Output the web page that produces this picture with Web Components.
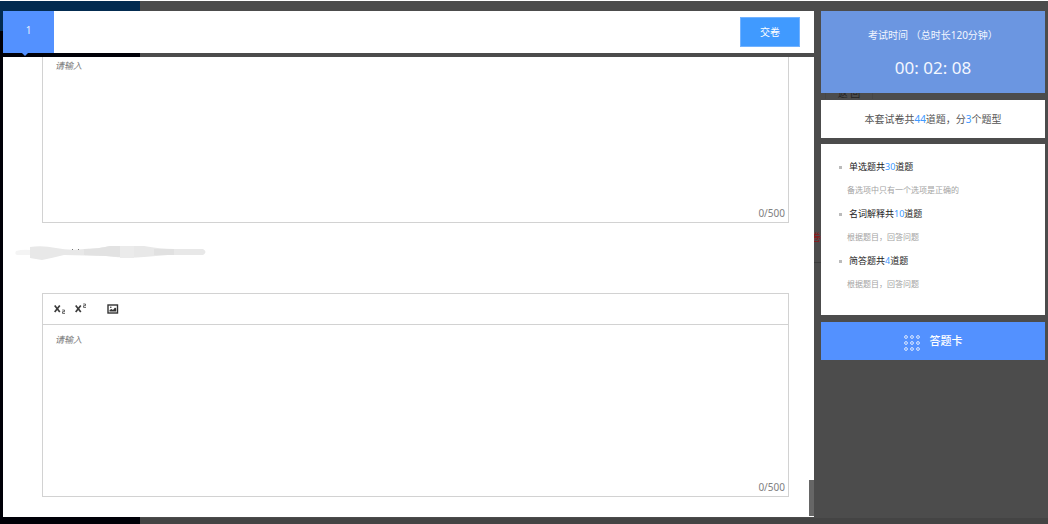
<!DOCTYPE html>
<html lang="zh-CN">
<head>
<meta charset="utf-8">
<meta name="viewport" content="width=device-width, initial-scale=1">
<title>在线考试</title>
<style>
  body { margin: 0; background: #4c4c4c; font-family: "Noto Sans", "Noto Sans CJK SC", sans-serif; font-size: 10px; line-height: 16px; }
</style>
</head>
<body>
<exam-page>
  <page-backdrop slot="backdrop"></page-backdrop>
  <exam-bar slot="main" number="1"></exam-bar>
  <question-panel slot="main">
    <answer-editor name="a1" bare></answer-editor>
    <masked-title></masked-title>
    <answer-editor name="a2"></answer-editor>
  </question-panel>
  <exam-timer slot="side" time="00: 02: 08">考试时间 （总时长120分钟）</exam-timer>
  <exam-summary slot="side" total="44" kinds="3"></exam-summary>
  <question-types slot="side">
    <question-type label="单选题" count="30">备选项中只有一个选项是正确的</question-type>
    <question-type label="名词解释" count="10">根据题目，回答问题</question-type>
    <question-type label="简答题" count="4">根据题目，回答问题</question-type>
  </question-types>
  <card-button slot="side">答题卡</card-button>
</exam-page>

<script>
  const define = (name, render) => customElements.define(name, class extends HTMLElement {
    constructor() {
      super();
      this.attachShadow({ mode: 'open' });
    }
    connectedCallback() {
      this.shadowRoot.innerHTML = render(this);
    }
  });

  define('exam-page', () => `
    <style>
      :host { display: grid; grid-template-columns: minmax(0, 1fr) 224px; gap: 7px; box-sizing: border-box; min-height: 100vh; padding: 11px 3px 7px; position: relative; }
      .main { display: flex; flex-direction: column; gap: 4px; position: relative; min-width: 0; }
      .side { display: flex; flex-direction: column; gap: 7px; position: relative; }
    </style>
    <slot name="backdrop"></slot>
    <div class="main"><slot name="main"></slot></div>
    <div class="side"><slot name="side"></slot></div>`);

  /* The dimmed page that stays under the exam layer. */
  define('page-backdrop', () => `
    <style>
      :host { display: block; position: absolute; inset: 0; overflow: hidden; border-top: 1px solid #fff; color: #242424; }
      .nav { width: 140px; height: 100%; background: linear-gradient(#032b50 30px, #000007 30px); }
      .foot { position: absolute; left: 140px; right: 0; bottom: 0; height: 6px; background: #444; }
      .rule { position: absolute; right: 227px; top: 261px; width: 8px; height: 1px; background: #3c3c3c; }
      .back { position: absolute; right: 175px; top: 84px; width: 48px; height: 14px; box-sizing: border-box; border: 1px solid #464646; border-width: 0 1px; text-align: center; line-height: 16px; }
      .mark { position: absolute; right: 227px; top: 228px; color: #8b1717; }
    </style>
    <div class="nav"></div><div class="foot"></div><div class="rule"></div>
    <div class="back">返 回</div><div class="mark">卷</div>`);

  define('exam-bar', el => `
    <style>
      :host { display: flex; align-items: center; justify-content: space-between; height: 42px; background: #fff; position: relative; z-index: 1; }
      .tab { position: relative; width: 51px; height: 42px; padding: 0 0 4px; border: 0; background: #5391ff; color: #e8f0ff; font: inherit; }
      .tab::after { content: ""; position: absolute; left: 19px; top: 42px; border: 3px solid transparent; border-top-color: #5391ff; border-bottom: 0; }
      .submit { width: 60px; height: 30px; margin-right: 14px; padding: 0; border: 1px solid #72b2ff; background: #409aff; color: #fff; font: inherit; }
    </style>
    <button class="tab" type="button">${el.getAttribute('number')}</button>
    <button class="submit" type="button">交卷</button>`);

  define('question-panel', () => `
    <style>
      :host { display: flex; flex: 1 0 460px; flex-direction: column; justify-content: flex-end; box-sizing: border-box; padding: 0 25px 20px 39px; overflow: hidden; background: #fff; position: relative; }
      .thumb { position: absolute; right: 0; bottom: 1px; width: 5px; height: 36px; background: #666; }
    </style>
    <slot></slot><div class="thumb"></div>`);

  define('masked-title', () => `
    <style>
      :host { display: block; height: 70px; flex: none; }
      svg { display: block; margin: 20px 0 0 -28px; }
    </style>
    <svg width="200" height="20" viewBox="0 0 200 20" aria-hidden="true">
      <path d="M2 8 Q9 6 16 7 V12 H4 Q0 12 2 8Z" fill="#f4f4f4"/>
      <path d="M16 4 Q28 2 42 5 T70 6 Q84 6 96 3 H130 Q146 6 160 6 L189 6 Q194 9 189 12 H154 L130 14 Q112 16 92 13 L50 12 Q38 15 28 17 L16 15Z" fill="#e8e8e8"/>
      <path d="M70 6 Q84 6 96 3 H106 V14 L92 13 70 12Z" fill="#e2e2e2"/>
      <path d="M106 3 H120 V15 H106Z" fill="#ebebeb"/>
      <path d="M140 6 L160 6 V12 H140Z" fill="#e1e1e1"/>
      <path d="M58 6h1v1h-1zM64 6h1v1h-1z" fill="#777"/>
    </svg>`);

  define('answer-editor', el => {
    const bare = el.hasAttribute('bare');
    const cross = '<path d="M.7 4.500L5.800 11M5.800 4.500L.7 11" stroke="#3c3c3c" stroke-width="1.700" fill="none"/>';
    const two = y => `<path d="M8.200 ${y}h2.300v1.700h-2v1.700h2.500" stroke="#555" stroke-width=".9" fill="none"/>`;
    const tools = `
      <div class="tools">
        <button type="button" aria-label="下标"><svg width="12" height="16" viewBox="0 0 12 16">${cross}${two(9)}</svg></button>
        <button type="button" aria-label="上标"><svg width="12" height="16" viewBox="0 0 12 16">${cross}${two(3)}</svg></button>
        <button type="button" class="image" aria-label="图片"><svg width="12" height="16" viewBox="0 0 12 16"><rect x="1" y="4" width="9.500" height="8" fill="#fff" stroke="#333" stroke-width="1.400"/><path d="M2.500 10.500V9l2-1 1.500 1 2-2.500 1.200 1v3z" fill="#333"/><circle cx="3.800" cy="6.300" r=".8" fill="#333"/></svg></button>
      </div>`;
    return `
    <style>
      :host { display: block; flex: none; position: relative; box-sizing: border-box; border: 1px solid #d2d2d2; }
      :host([bare]) { border-top: 0; }
      .tools { display: flex; align-items: center; gap: 9px; height: 30px; padding-left: 11px; border-bottom: 1px solid #d2d2d2; }
      .tools button { width: 12px; height: 16px; padding: 0; border: 0; background: none; }
      .tools svg { display: block; }
      .tools .image { margin-left: 11px; }
      textarea { display: block; box-sizing: border-box; width: 100%; height: 171px; padding: 7px 12px; border: 0; outline: 0; resize: none; background: transparent; color: #333; font: 9px/16px "Noto Sans", "Noto Sans CJK SC", sans-serif; }
      textarea::placeholder { color: #777; font-style: italic; opacity: 1; }
      .count { position: absolute; right: 3px; bottom: 1px; color: #808080; }
    </style>
    ${bare ? '' : tools}
    <textarea name="${el.getAttribute('name')}" aria-label="答案" maxlength="500" placeholder="请输入"></textarea>
    <span class="count">0/500</span>`;
  });

  define('exam-timer', el => `
    <style>
      :host { display: block; height: 82px; box-sizing: border-box; padding-top: 16px; background: #6b96e1; color: #f3f7ff; text-align: center; }
      .time { margin-top: 13px; font-size: 17px; line-height: 24px; }
    </style>
    <div><slot></slot></div>
    <div class="time">${el.getAttribute('time')}</div>`);

  define('exam-summary', el => `
    <style>
      :host { display: block; box-sizing: border-box; height: 38px; padding: 11px 0; background: #fff; color: #555; text-align: center; }
      b { font-weight: 400; color: #409aff; }
    </style>
    本套试卷共<b>${el.getAttribute('total')}</b>道题，分<b>${el.getAttribute('kinds')}</b>个题型`);

  define('question-types', () => `
    <style>
      :host { display: block; box-sizing: border-box; height: 171px; margin-top: -1px; padding: 15px 18px; background: #fff; }
    </style>
    <slot></slot>`);

  define('question-type', el => `
    <style>
      :host { display: block; height: 47px; }
      .name { display: flex; align-items: center; height: 16px; color: #222; font-size: 9px; }
      .name::before { content: ""; width: 3px; height: 3px; margin-right: 7px; background: #bbb; }
      b { font-weight: 400; color: #409aff; }
      .hint { margin: 7px 0 0 8px; color: #a3a3a3; font-size: 8px; }
    </style>
    <div class="name"><span>${el.getAttribute('label')}共<b>${el.getAttribute('count')}</b>道题</span></div>
    <div class="hint"><slot></slot></div>`);

  define('card-button', () => {
    const dots = [2, 8, 14].flatMap(y => [2, 8, 14].map(x => `<circle cx="${x}" cy="${y}" r="1.400"/>`)).join('');
    return `
    <style>
      :host { display: block; }
      button { display: flex; align-items: center; justify-content: center; gap: 10px; width: 100%; height: 38px; padding: 0; border: 0; background: #5391ff; color: #fff; font: inherit; font-size: 11px; font-weight: 500; }
      svg { margin-top: 3px; }
    </style>
    <button type="button"><svg width="16" height="16" viewBox="0 0 16 16" fill="none" stroke="#dce9ff" aria-hidden="true">${dots}</svg><slot></slot></button>`;
  });
</script>
</body>
</html>
